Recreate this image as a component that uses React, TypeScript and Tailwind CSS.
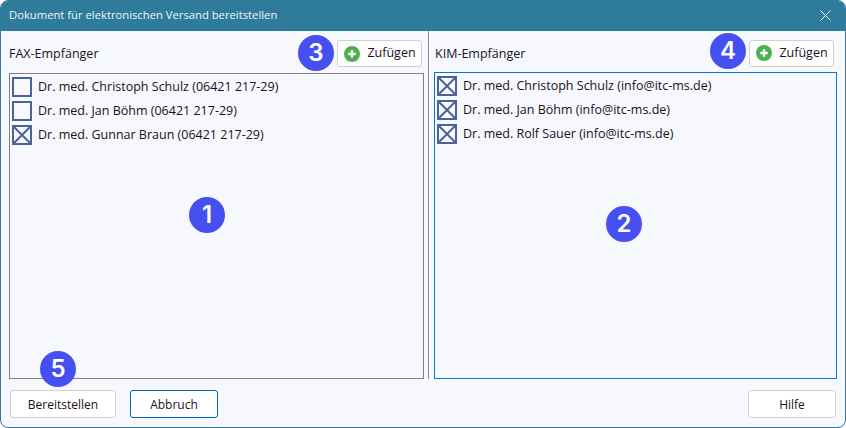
import React from 'react';

const faxList = [
  { name: 'Dr. med. Christoph Schulz (06421 217-29)', checked: false },
  { name: 'Dr. med. Jan Böhm (06421 217-29)', checked: false },
  { name: 'Dr. med. Gunnar Braun (06421 217-29)', checked: true },
];

const kimList = [
  { name: 'Dr. med. Christoph Schulz (info@itc-ms.de)', checked: true },
  { name: 'Dr. med. Jan Böhm (info@itc-ms.de)', checked: true },
  { name: 'Dr. med. Rolf Sauer (info@itc-ms.de)', checked: true },
];

function Badge({ n, className }: { n: number; className: string }) {
  return (
    <div
      className={`absolute flex h-9 w-9 items-center justify-center rounded-full bg-[#4650f0] font-['Inter',sans-serif] text-[24px] font-semibold leading-none text-white ${className}`}
    >
      {n}
    </div>
  );
}

function CheckBox({ checked }: { checked: boolean }) {
  return (
    <svg width="20" height="20" viewBox="0 0 20 20" className="shrink-0">
      <rect x="1" y="1" width="18" height="18" fill="none" stroke="#4a6496" strokeWidth="2" />
      {checked && <path d="M2 2L18 18M18 2L2 18" stroke="#4a6496" strokeWidth="2" />}
    </svg>
  );
}

function Row({ name, checked }: { name: string; checked: boolean }) {
  return (
    <div className="flex h-6 items-center gap-[6px]">
      <CheckBox checked={checked} />
      <span className="whitespace-nowrap text-[12.5px] text-[#1a1024]">{name}</span>
    </div>
  );
}

function AddButton() {
  return (
    <button className="flex h-[27px] w-[85px] items-center justify-center gap-[7px] rounded-[3px] border border-[#cfcfcf] bg-white pl-px text-[12.5px] text-[#1a1024]">
      <svg width="16" height="16" viewBox="0 0 16 16">
        <circle cx="8" cy="8" r="8" fill="#4caf50" />
        <path d="M8 4.2V11.8M4.2 8H11.8" stroke="#fff" strokeWidth="2.4" />
      </svg>
      Zufügen
    </button>
  );
}

function FooterButton({ label, width, primary }: { label: string; width: string; primary?: boolean }) {
  return (
    <button
      className={`h-7 rounded-[3px] border bg-white pt-px text-[#1a1024] ${width} ${
        primary ? 'border-[#0067c0]' : 'border-[#cfcfcf]'
      }`}
    >
      {label}
    </button>
  );
}

export default function App() {
  return (
    <div className="relative flex h-[428px] w-[846px] flex-col overflow-hidden rounded-[8px] border border-[#2e7b9b] bg-[#f6f8fd] font-['Open_Sans','Noto_Sans',sans-serif] text-[12px]">
      <div className="-mx-px -mt-px flex h-[31px] shrink-0 items-center justify-between bg-[#2e7b9b] pl-[9px] pr-[15px] text-[11.25px] text-[#eef5f8]">
        <span>Dokument für elektronischen Versand bereitstellen</span>
        <svg width="11" height="11" viewBox="0 0 11 11">
          <path d="M0.5 0.5L10.5 10.5M10.5 0.5L0.5 10.5" stroke="#fff" strokeWidth="1" />
        </svg>
      </div>

      <div className="flex h-[348px] shrink-0">
        <div className="flex w-[428px] flex-col border-r border-[#8c8c8c] pl-2 pr-[4px]">
          <div className="flex h-[42px] items-center justify-between pr-[2px] pt-[3px]">
            <span className="pt-px text-[12.5px] text-[#1a1024]">FAX-Empfänger</span>
            <AddButton />
          </div>
          <div className="h-[306px] border border-[#808080] px-[2px] pt-[1px]">
            {faxList.map((r) => (
              <Row key={r.name} {...r} />
            ))}
          </div>
        </div>

        <div className="flex flex-1 flex-col pl-[5px] pr-2">
          <div className="flex h-[41px] items-center justify-between pr-[3px] pt-[3px]">
            <span className="pl-px pt-[2px] text-[12.5px] text-[#1a1024]">KIM-Empfänger</span>
            <AddButton />
          </div>
          <div className="h-[307px] border border-[#0078d4] px-[2px] pt-px">
            {kimList.map((r) => (
              <Row key={r.name} {...r} />
            ))}
          </div>
        </div>
      </div>

      <div className="flex flex-1 items-start justify-between pl-[9px] pr-[9px] pt-[11px]">
        <div className="flex gap-[14px]">
          <FooterButton label="Bereitstellen" width="w-[106px]" />
          <FooterButton label="Abbruch" width="w-[88px]" primary />
        </div>
        <FooterButton label="Hilfe" width="w-[88px]" />
      </div>

      <Badge n={1} className="left-[188px] top-[196px]" />
      <Badge n={2} className="left-[605px] top-[205px]" />
      <Badge n={3} className="left-[297px] top-[34px]" />
      <Badge n={4} className="left-[709px] top-[32px]" />
      <Badge n={5} className="left-[39px] top-[350px]" />
    </div>
  );
}
